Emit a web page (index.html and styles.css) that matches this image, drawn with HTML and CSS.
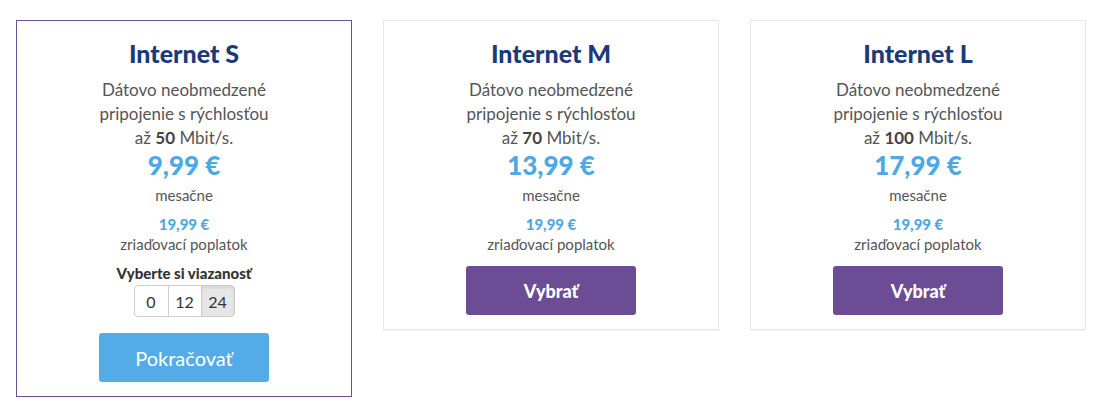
FILE: index.html
```html
<!DOCTYPE html>
<html lang="sk">
<head>
  <meta charset="UTF-8">
  <title>Internet - výber balíka</title>
  <link rel="stylesheet" href="styles.css">
</head>
<body>
  <div class="plans">
    <div class="plan active">
      <h2>Internet S</h2>
      <p class="desc">Dátovo neobmedzené<br>pripojenie s rýchlosťou<br>až <b>50</b> Mbit/s.</p>
      <div class="price">9,99 €</div>
      <div class="period">mesačne</div>
      <div class="fee">19,99 €</div>
      <div class="fee-label">zriaďovací poplatok</div>
      <div class="commit-label">Vyberte si viazanosť</div>
      <div class="commit">
        <button>0</button><button>12</button><button class="on">24</button>
      </div>
      <button class="btn btn-continue">Pokračovať</button>
    </div>
    <div class="plan">
      <h2>Internet M</h2>
      <p class="desc">Dátovo neobmedzené<br>pripojenie s rýchlosťou<br>až <b>70</b> Mbit/s.</p>
      <div class="price">13,99 €</div>
      <div class="period">mesačne</div>
      <div class="fee">19,99 €</div>
      <div class="fee-label">zriaďovací poplatok</div>
      <button class="btn btn-select">Vybrať</button>
    </div>
    <div class="plan">
      <h2>Internet L</h2>
      <p class="desc">Dátovo neobmedzené<br>pripojenie s rýchlosťou<br>až <b>100</b> Mbit/s.</p>
      <div class="price">17,99 €</div>
      <div class="period">mesačne</div>
      <div class="fee">19,99 €</div>
      <div class="fee-label">zriaďovací poplatok</div>
      <button class="btn btn-select">Vybrať</button>
    </div>
  </div>
</body>
</html>
```

FILE: styles.css
```css
body {margin:0; background:#fff; font-family:Lato, "Liberation Sans", sans-serif; color:#555;}
.plans {display:grid; grid-template-columns:repeat(3, 1fr); gap:31px; padding:20px 16px; align-items:start;}
.plan {border:1px solid #e6e6e6; background:#fff; text-align:center; padding:18px 15px 14px; display:flex; flex-direction:column; align-items:center; box-shadow:0 1px 0 #f3f3f3;}
.plan.active {border-color:#6b5190;}
.plan h2 {margin:0; font-size:25px; line-height:29px; font-weight:900; color:#1a3b78;}
.desc {margin:10px 0 0; font-size:17px; line-height:24px;}
.desc b {color:#444;}
.price {margin-top:1px; font-size:26px; line-height:29px; font-weight:900; color:#4fa8e2;}
.period {margin-top:5px; font-size:15px; line-height:20px;}
.fee {margin-top:9px; font-size:15px; line-height:20px; font-weight:900; color:#4fa8e2;}
.fee-label {font-size:15px; line-height:20px;}
.commit-label {margin-top:9px; font-size:15px; line-height:20px; font-weight:900; color:#333;}
.commit {display:flex; margin-top:2px;}
.commit button {font-family:inherit; font-size:16px; color:#333; background:#fff; border:1px solid #ccc; height:32px; width:34px; padding:0; margin-left:-1px; cursor:pointer;}
.commit button:first-child {margin-left:0; width:35px; border-radius:4px 0 0 4px;}
.commit button:last-child {border-radius:0 4px 4px 0;}
.commit button.on {background:#e6e6e6; box-shadow:inset 0 2px 3px rgba(0,0,0,0.08);}
.btn {width:170px; height:49px; border:none; border-radius:3px; color:#fff; font-family:inherit; cursor:pointer;}
.btn-continue {margin-top:16px; background:#53abe8; font-size:20px;}
.btn-select {margin-top:12px; background:#6d4c96; font-size:18px; font-weight:900;}
```
